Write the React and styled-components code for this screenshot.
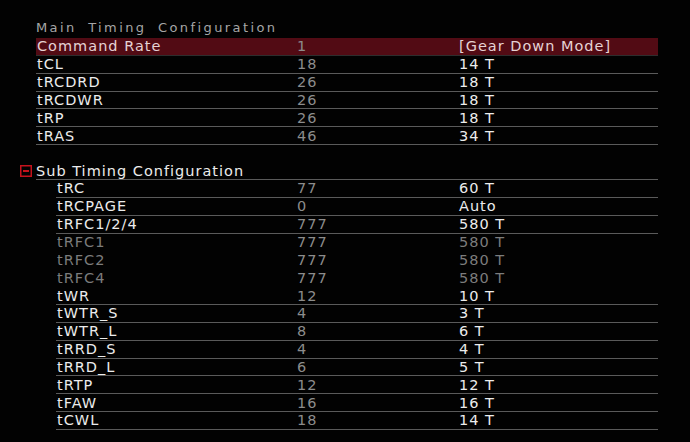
import React from "react";
import styled, { createGlobalStyle } from "styled-components";

const mainRows = [
  { name: "Command Rate", value: "1", setting: "[Gear Down Mode]", active: true },
  { name: "tCL", value: "18", setting: "14 T" },
  { name: "tRCDRD", value: "26", setting: "18 T" },
  { name: "tRCDWR", value: "26", setting: "18 T" },
  { name: "tRP", value: "26", setting: "18 T" },
  { name: "tRAS", value: "46", setting: "34 T" },
];

const subRows = [
  { name: "tRC", value: "77", setting: "60 T" },
  { name: "tRCPAGE", value: "0", setting: "Auto" },
  { name: "tRFC1/2/4", value: "777", setting: "580 T" },
  { name: "tRFC1", value: "777", setting: "580 T", disabled: true },
  { name: "tRFC2", value: "777", setting: "580 T", disabled: true },
  { name: "tRFC4", value: "777", setting: "580 T", disabled: true },
  { name: "tWR", value: "12", setting: "10 T" },
  { name: "tWTR_S", value: "4", setting: "3 T" },
  { name: "tWTR_L", value: "8", setting: "6 T" },
  { name: "tRRD_S", value: "4", setting: "4 T" },
  { name: "tRRD_L", value: "6", setting: "5 T" },
  { name: "tRTP", value: "12", setting: "12 T" },
  { name: "tFAW", value: "16", setting: "16 T" },
  { name: "tCWL", value: "18", setting: "14 T" },
];

const App = () => {
  return (
    <>
      <GlobalStyle />
      <Screen>
        <Title>Main Timing Configuration</Title>
        <Table $indent={36}>
          {mainRows.map((r) => (
            <Row key={r.name} $active={r.active} $nameCol={261}>
              <Name>{r.name}</Name>
              <Value>{r.value}</Value>
              <Setting>{r.setting}</Setting>
            </Row>
          ))}
        </Table>

        <SubHeader>
          <Toggle>
            <svg width="12" height="12" viewBox="0 0 12 12">
              <rect x="0.75" y="0.75" width="10.5" height="10.5" fill="none" stroke="#c4121c" strokeWidth="1.5" />
              <rect x="3" y="5" width="6" height="2" fill="#c4121c" />
            </svg>
          </Toggle>
          <SubTitle>Sub Timing Configuration</SubTitle>
        </SubHeader>
        <Table $indent={56}>
          {subRows.map((r) => (
            <Row key={r.name} $disabled={r.disabled} $nameCol={241}>
              <Name>{r.name}</Name>
              <Value>{r.value}</Value>
              <Setting>{r.setting}</Setting>
            </Row>
          ))}
        </Table>
      </Screen>
    </>
  );
};

export default App;

const GlobalStyle = createGlobalStyle`
  html, body {
    margin: 0;
    background: #000;
  }
  body {
    font-family: "DejaVu Sans", "Liberation Sans", sans-serif;
  }
`;

const Screen = styled.div`
  width: 690px;
  height: 442px;
  background: #020202;
  padding-top: 17px;
  box-sizing: border-box;
  overflow: hidden;
`;

const Title = styled.div`
  height: 21px;
  line-height: 21px;
  padding-left: 36px;
  font-size: 13px;
  letter-spacing: 2.4px;
  word-spacing: 5px;
  color: #a6a6a6;
  white-space: nowrap;
`;

const Table = styled.div`
  margin-left: ${(p) => p.$indent}px;
  width: ${(p) => 658 - p.$indent}px;
  display: flex;
  flex-direction: column;
`;

const Row = styled.div`
  display: grid;
  grid-template-columns: ${(p) => p.$nameCol}px 162px 1fr;
  align-items: center;
  height: 17.85px;
  box-sizing: border-box;
  font-size: 14.5px;
  letter-spacing: 1px;
  background: ${(p) => (p.$active ? "#520b14" : "transparent")};
  border-bottom: 1px solid
    ${(p) => (p.$disabled ? "transparent" : p.$active ? "#2e2e2e" : "#5a5a5a")};
  color: ${(p) => (p.$disabled ? "#7c7c7c" : p.$active ? "#e6d2d4" : "#ececec")};
`;

const Name = styled.span`
  padding-left: 1px;
  white-space: nowrap;
`;

const Value = styled.span`
  color: #8c8c8c;
`;

const Setting = styled.span`
  white-space: nowrap;
`;

const SubHeader = styled.div`
  margin-top: 17px;
  height: 18px;
  display: flex;
  align-items: center;
  padding-left: 20px;
  gap: 4px;
`;

const Toggle = styled.span`
  display: flex;
  width: 12px;
  height: 12px;
`;

const SubTitle = styled.div`
  flex: 1;
  margin-right: 32px;
  height: 18px;
  line-height: 18px;
  box-sizing: border-box;
  border-bottom: 1px solid #5a5a5a;
  font-size: 14.5px;
  letter-spacing: 1px;
  color: #ececec;
  white-space: nowrap;
`;
